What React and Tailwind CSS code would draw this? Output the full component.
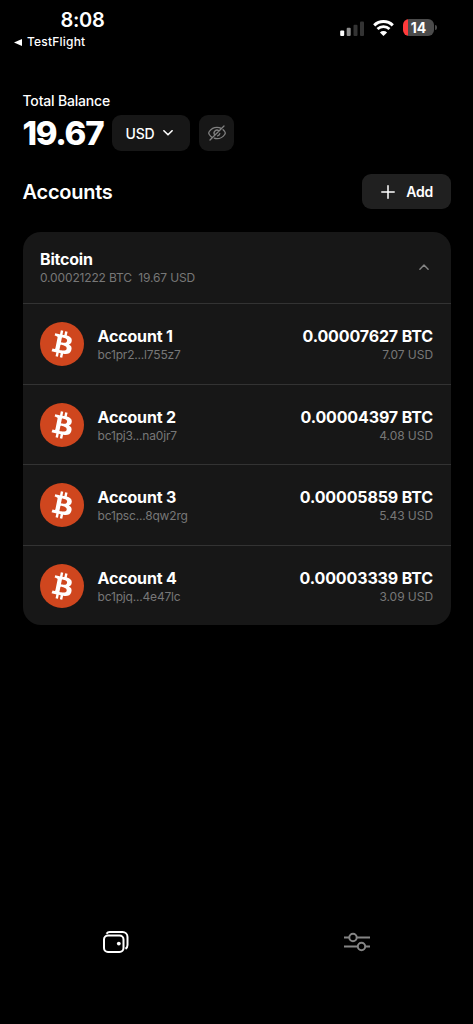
import React from "react";

const accounts = [
  { name: "Account 1", address: "bc1pr2...l755z7", btc: "0.00007627 BTC", usd: "7.07 USD" },
  { name: "Account 2", address: "bc1pj3...na0jr7", btc: "0.00004397 BTC", usd: "4.08 USD" },
  { name: "Account 3", address: "bc1psc...8qw2rg", btc: "0.00005859 BTC", usd: "5.43 USD" },
  { name: "Account 4", address: "bc1pjq...4e47lc", btc: "0.00003339 BTC", usd: "3.09 USD" },
];

function BitcoinLogo() {
  return (
    <svg viewBox="0 0 32 32" className="size-11 shrink-0">
      <circle cx="16" cy="16" r="16" fill="#cf461e" />
      <path
        transform="rotate(-2.500 16 16)"
        fill="#fff"
        d="M23.189 14.02c.314-2.096-1.283-3.223-3.465-3.975l.708-2.84-1.728-.43-.69 2.765c-.454-.114-.92-.22-1.385-.326l.695-2.783L15.596 6l-.708 2.839c-.376-.086-.746-.17-1.104-.26l.002-.009-2.384-.595-.46 1.846s1.283.294 1.256.312c.7.175.826.638.805 1.006l-.806 3.235c.048.012.11.03.18.057l-.183-.045-1.13 4.532c-.086.212-.303.531-.793.41.018.025-1.256-.313-1.256-.313l-.858 1.978 2.25.561c.418.105.828.215 1.231.318l-.715 2.872 1.727.43.708-2.84c.472.127.93.245 1.378.357l-.706 2.828 1.728.43.715-2.866c2.948.558 5.164.333 6.097-2.333.752-2.146-.037-3.385-1.588-4.192 1.13-.26 1.98-1.003 2.207-2.538zm-3.95 5.538c-.533 2.147-4.148.986-5.32.695l.95-3.805c1.172.293 4.929.872 4.37 3.11zm.535-5.569c-.487 1.953-3.495.96-4.47.717l.86-3.45c.975.243 4.118.696 3.61 2.733z"
      />
    </svg>
  );
}

function StatusBar() {
  return (
    <div className="flex h-[93px] items-start justify-between pr-9 pl-3.5">
      <div className="flex flex-col pt-2">
        <div className="pl-[46.5px] text-[20px] leading-6 font-semibold tracking-[-0.3px]">8:08</div>
        <div className="flex items-center gap-[5px] pt-0.5 text-[12px] leading-4 font-medium tracking-[0.2px]">
          <svg viewBox="0 0 8 8" className="h-[7px] w-2" preserveAspectRatio="none">
            <path d="M0 4 8 0v8z" fill="#fff" />
          </svg>
          TestFlight
        </div>
      </div>
      <div className="flex items-center gap-[9px] pt-[19px]">
        <svg viewBox="0 0 25 16" className="h-4 w-[25px]">
          <rect x="1.200" y="10.500" width="4" height="5.500" rx="1" fill="#fff" />
          <rect x="7.700" y="7.700" width="4" height="8.300" rx="1" fill="#8b8b8b" />
          <rect x="14.500" y="4.700" width="4" height="11.300" rx="1" fill="#333" />
          <rect x="21" y="1.500" width="4" height="14.500" rx="1" fill="#333" />
        </svg>
        <svg viewBox="0 0 21 16" className="h-4 w-[21px]" fill="none" stroke="#fff">
          <path d="M1.200 5.400a13.300 13.300 0 0 1 18.600 0" strokeWidth="3" />
          <path d="M4.500 9a8.600 8.600 0 0 1 12 0" strokeWidth="2.800" />
          <path d="M10.500 16 6.900 12.400a5.100 5.100 0 0 1 7.200 0z" fill="#fff" stroke="none" />
        </svg>
        <div className="flex items-center gap-px">
          <div className="flex h-[17px] w-[31px] items-center justify-center overflow-hidden rounded-[6px] bg-[linear-gradient(to_right,#ff3b3b_5px,#4b4b4b_5px)] text-[14px] leading-none font-bold">
            14
          </div>
          <div className="h-[5px] w-[2px] rounded-r-full bg-[#4b4b4b]" />
        </div>
      </div>
    </div>
  );
}

export default function App() {
  return (
    <div className="flex h-[1024px] w-[473px] flex-col bg-black font-['Inter',sans-serif] text-white">
      <StatusBar />
      <main className="flex flex-col pr-[22.5px] pl-[22.5px]">
        <div className="h-[22px] text-[14px] leading-4 font-medium tracking-[-0.180px]">Total Balance</div>
        <div className="flex h-9 items-center">
          <div className="w-[89.5px] text-[33px] leading-9 font-extrabold tracking-[-1.300px] whitespace-nowrap">19.67</div>
          <button className="flex h-9 w-[78px] items-center justify-center gap-2 rounded-[9px] bg-[#171717] pr-1 text-[14px] font-medium tracking-[-0.100px]">
            USD
            <svg viewBox="0 0 10 6" className="h-1.5 w-2.5" fill="none" stroke="#fff" strokeWidth="1.600" strokeLinecap="round" strokeLinejoin="round">
              <path d="m.9.8 4.100 4 4.100-4" />
            </svg>
          </button>
          <button className="ml-[9px] flex h-9 w-[35px] items-center justify-center rounded-[9px] bg-[#171717]">
            <svg viewBox="0 0 18 16" className="h-4 w-[18px]" fill="none" stroke="#808080" strokeWidth="1.300" strokeLinecap="round">
              <path d="M13.200 3.400C11.900 2.700 10.500 2.300 9 2.300 5.900 2.300 3.100 3.900 1.300 6.500c-.7 1-.7 2 0 3 .7 1 1.600 2 2.600 2.700M6.300 13.200c.9.400 1.800.5 2.700.5 3.100 0 5.900-1.600 7.700-4.200.7-1 .7-2 0-3-.5-.7-1-1.300-1.600-1.800" />
              <path d="M11 6a2.900 2.900 0 0 0-4.100 4.100M11.800 8.600a2.900 2.900 0 0 1-2.200 2.200M16 1 2 15" />
            </svg>
          </button>
        </div>
        <div className="mt-[23px] flex h-[35px] items-center justify-between">
          <h1 className="text-[20px] leading-6 font-semibold tracking-[-0.250px]">Accounts</h1>
          <button className="flex h-[35px] w-[88.5px] items-center justify-center gap-[11px] rounded-[9px] bg-[#202020] pl-0.5 text-[14px] font-semibold tracking-[-0.200px]">
            <svg viewBox="0 0 14 14" className="size-3.5" stroke="#fff" strokeWidth="1.500" strokeLinecap="round">
              <path d="M7 .8v12.400M.8 7h12.400" />
            </svg>
            Add
          </button>
        </div>
        <section className="mt-[23px] flex h-[393px] flex-col overflow-hidden rounded-[18px] bg-[#171717]">
          <header className="flex h-[71px] shrink-0 items-center justify-between pr-[22px] pl-[17.5px]">
            <div className="flex flex-col">
              <h2 className="text-[16px] leading-5 font-bold tracking-[-0.200px]">Bitcoin</h2>
              <p className="text-[12px] leading-[17px] tracking-[-0.150px] whitespace-pre text-[#777]">0.00021222 BTC  19.67 USD</p>
            </div>
            <svg viewBox="0 0 10 6" className="mb-0.5 h-1.5 w-2.5" fill="none" stroke="#858585" strokeWidth="1.400" strokeLinecap="round" strokeLinejoin="round">
              <path d="m.9 5.200 4.100-4.200 4.100 4.200" />
            </svg>
          </header>
          {accounts.map((a) => (
            <div key={a.name} className="flex h-[80.700px] shrink-0 items-center border-t border-[#333] px-[17.5px]">
              <BitcoinLogo />
              <div className="ml-[13.5px] flex flex-1 flex-col pt-0.5">
                <div className="text-[16px] leading-5 font-bold tracking-[-0.150px]">{a.name}</div>
                <div className="text-[12px] leading-[18px] tracking-[-0.180px] text-[#777]">{a.address}</div>
              </div>
              <div className="flex flex-col pt-0.5 text-right">
                <div className="text-[16px] leading-5 font-bold tracking-[-0.130px]">{a.btc}</div>
                <div className="text-[12px] leading-[18px] tracking-[-0.050px] text-[#777]">{a.usd}</div>
              </div>
            </div>
          ))}
        </section>
      </main>
      <nav className="mt-auto grid h-[108px] grid-cols-2 justify-items-center">
        <svg viewBox="0 0 28 26" className="mt-[13px] ml-[-4px] h-[26px] w-7" fill="none" stroke="#fff" strokeWidth="2">
          <rect x="2" y="6.500" width="19.500" height="16.500" rx="4" />
          <path d="M4.500 4.700C5.200 3.700 6.300 3 7.700 3H20.500a5 5 0 0 1 5 5V16c0 1.700-.8 3-2 3.800" />
          <circle cx="16.800" cy="14.600" r="1.900" fill="#fff" stroke="none" />
        </svg>
        <svg viewBox="0 0 28 20" className="mt-4 ml-[4px] h-5 w-7" fill="none" stroke="#858585" strokeWidth="2">
          <path d="M1 5.500h5M14 5.500h13M1 14.500h13.500M22.500 14.500H27" />
          <circle cx="10" cy="5.500" r="3.700" />
          <circle cx="18.500" cy="14.500" r="3.700" />
        </svg>
      </nav>
    </div>
  );
}
